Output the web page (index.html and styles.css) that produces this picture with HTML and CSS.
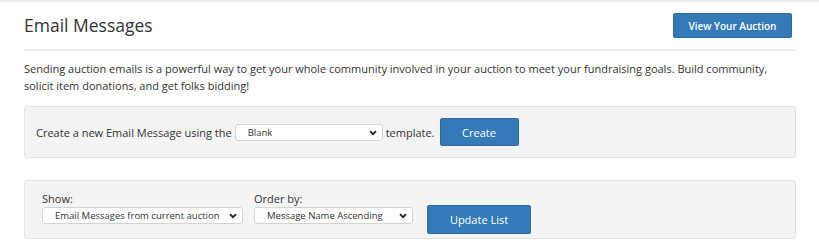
FILE: index.html
```html
<html>
<head>
  <title>Email Messages</title>
  <meta charset="UTF-8">
  <link rel="stylesheet" href="styles.css">
</head>
<body>
  <div class="page">
    <div class="header">
      <h1 class="title">Email Messages</h1>
      <button class="btn btn-small">View Your Auction</button>
    </div>

    <p class="intro">
      Sending auction emails is a powerful way to get your whole community involved in your auction to meet your fundraising goals. Build community, solicit item donations, and get folks bidding!
    </p>

    <div class="panel create-panel">
      <span>Create a new Email Message using the</span>
      <div class="select-wrap select-template">
        <select>
          <option>Blank</option>
        </select>
        <svg class="chevron" width="8" height="6" viewBox="0 0 8 6"><path d="M1 1.2 L4 4.2 L7 1.2" fill="none" stroke="#222" stroke-width="1.8"/></svg>
      </div>
      <span>template.</span>
      <button class="btn btn-create">Create</button>
    </div>

    <div class="panel filter-panel">
      <div class="field">
        <label>Show:</label>
        <div class="select-wrap select-show">
          <select>
            <option>Email Messages from current auction</option>
          </select>
          <svg class="chevron" width="8" height="6" viewBox="0 0 8 6"><path d="M1 1.2 L4 4.2 L7 1.2" fill="none" stroke="#222" stroke-width="1.8"/></svg>
        </div>
      </div>
      <div class="field">
        <label>Order by:</label>
        <div class="select-wrap select-order">
          <select>
            <option>Message Name Ascending</option>
          </select>
          <svg class="chevron" width="8" height="6" viewBox="0 0 8 6"><path d="M1 1.2 L4 4.2 L7 1.2" fill="none" stroke="#222" stroke-width="1.8"/></svg>
        </div>
      </div>
      <button class="btn btn-update">Update List</button>
    </div>
  </div>
</body>
</html>
```

FILE: styles.css
```css
body {
  margin: 0;
  background: #fff;
  border-top: 2px solid #eee;
  font-family: 'Open Sans', 'Liberation Sans', sans-serif;
  font-size: 11px;
  color: #333;
}

.page {
  padding: 0 23px 0 24px;
}

.header {
  display: flex;
  justify-content: space-between;
  align-items: center;
  padding: 11px 4px 11px 0;
  border-bottom: 2px solid #eee;
}

.title {
  margin: 0;
  font-size: 17.5px;
  font-weight: normal;
  line-height: 25px;
  color: #333;
}

.btn {
  background: #337ab7;
  border: 1px solid #2e6da4;
  border-radius: 2px;
  color: #fff;
  font-family: 'Open Sans', 'Liberation Sans', sans-serif;
  cursor: pointer;
  padding: 0;
}

.btn-small {
  width: 119px;
  height: 25px;
  font-size: 10px;
  font-weight: 600;
}

.intro {
  margin: 9px 0 12px;
  line-height: 17px;
}

.panel {
  background: #f4f4f4;
  border: 1px solid #e3e3e3;
  border-radius: 3px;
}

.create-panel {
  display: flex;
  align-items: center;
  gap: 3px;
  padding: 11px;
  margin-bottom: 22px;
}

.btn-create {
  width: 79px;
  height: 28px;
  font-size: 11px;
  margin-left: 2px;
}

.select-wrap {
  position: relative;
}

.select-wrap select {
  -webkit-appearance: none;
  appearance: none;
  width: 100%;
  height: 17px;
  padding: 0 0 0 12px;
  border: 1px solid #d4d4d4;
  border-radius: 3px;
  background: #fff;
  font-family: 'Open Sans', 'Liberation Sans', sans-serif;
  font-size: 9.5px;
  color: #333;
  display: block;
}

.chevron {
  position: absolute;
  right: 6px;
  top: 6px;
  pointer-events: none;
}

.select-template {
  width: 148px;
}

.select-show {
  width: 201px;
}

.select-order {
  width: 159px;
}

.filter-panel {
  display: flex;
  align-items: flex-start;
  padding: 10px 17px 4px;
}

.field {
  margin-right: 11px;
}

.field label {
  display: block;
  line-height: 16px;
}

.btn-update {
  width: 104px;
  height: 29px;
  font-size: 11px;
  margin: 14px 0 0 3px;
}
```
